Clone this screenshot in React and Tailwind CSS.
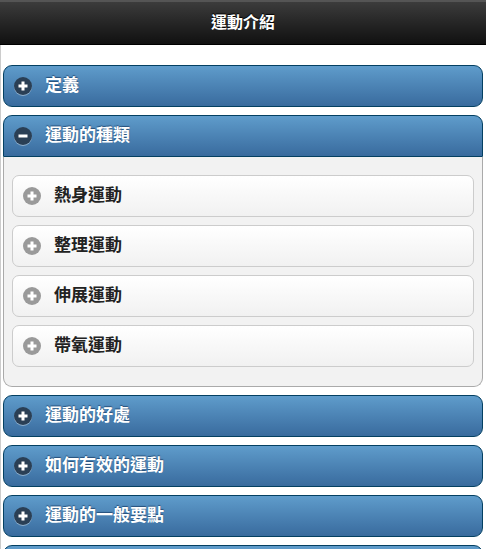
import React, { useState } from 'react';

const sections = [
  { title: '定義', items: [] },
  { title: '運動的種類', items: ['熱身運動', '整理運動', '伸展運動', '帶氧運動'] },
  { title: '運動的好處', items: [] },
  { title: '如何有效的運動', items: [] },
  { title: '運動的一般要點', items: [] },
  { title: '運動的注意事項', items: [] },
];

const font = { fontFamily: '"Liberation Sans", "Noto Sans CJK TC", sans-serif' };

const PlusMinus = ({ open, light }) => (
  <span
    className={`flex h-[18px] w-[18px] shrink-0 items-center justify-center rounded-full ${
      light ? 'bg-[#9a9a9a]' : 'bg-[#2a3f55] shadow-[0_1px_0_rgba(255,255,255,0.4)]'
    }`}
  >
    <svg width="10" height="10" viewBox="0 0 10 10">
      <rect x="0.5" y="3.5" width="9" height="3" fill="#fff" />
      {!open && <rect x="3.5" y="0.5" width="3" height="9" fill="#fff" />}
    </svg>
  </span>
);

const SubItem = ({ label }) => (
  <div className="flex h-[42px] items-center gap-[13px] rounded-[7px] border border-[#cccccc] bg-gradient-to-b from-[#ffffff] to-[#f1f1f1] pl-[10px] text-[17px] font-bold text-[#222]">
    <PlusMinus light />
    <span>{label}</span>
  </div>
);

const Section = ({ title, items, open, onToggle }) => (
  <div>
    <button
      onClick={onToggle}
      className={`flex h-[42px] w-full items-center gap-[13px] border border-[#044062] bg-gradient-to-b from-[#5f9ccb] to-[#396b9e] pl-[10px] text-left text-[17px] font-bold text-white [text-shadow:0_-1px_1px_#254f7a] ${
        open ? 'rounded-t-[9px]' : 'rounded-[9px]'
      }`}
    >
      <PlusMinus open={open} />
      <span>{title}</span>
    </button>
    {open && (
      <div className="flex flex-col gap-2 rounded-b-[9px] border border-t-0 border-[#aaaaaa] bg-[#f2f2f2] px-[8px] pb-[19px] pt-[18px]">
        {items.map((it) => (
          <SubItem key={it} label={it} />
        ))}
      </div>
    )}
  </div>
);

export default function App() {
  const [openIdx, setOpenIdx] = useState(1);

  return (
    <div className="h-[549px] overflow-hidden bg-white" style={font}>
      <div className="flex h-[45px] items-center justify-center border-t-2 border-b border-t-[#555] border-b-[#000] bg-gradient-to-b from-[#3c3c3c] to-[#111111] text-[16px] font-bold text-white [text-shadow:0_-1px_1px_#000]">
        運動介紹
      </div>
      <div className="h-full border-l border-[#cccccc]">
        <div className="flex flex-col gap-2 pl-[2px] pr-[3px] pt-[20px]">
          {sections.map((s, i) => (
            <Section
              key={s.title}
              title={s.title}
              items={s.items}
              open={openIdx === i}
              onToggle={() => setOpenIdx(openIdx === i ? -1 : i)}
            />
          ))}
        </div>
      </div>
    </div>
  );
}
